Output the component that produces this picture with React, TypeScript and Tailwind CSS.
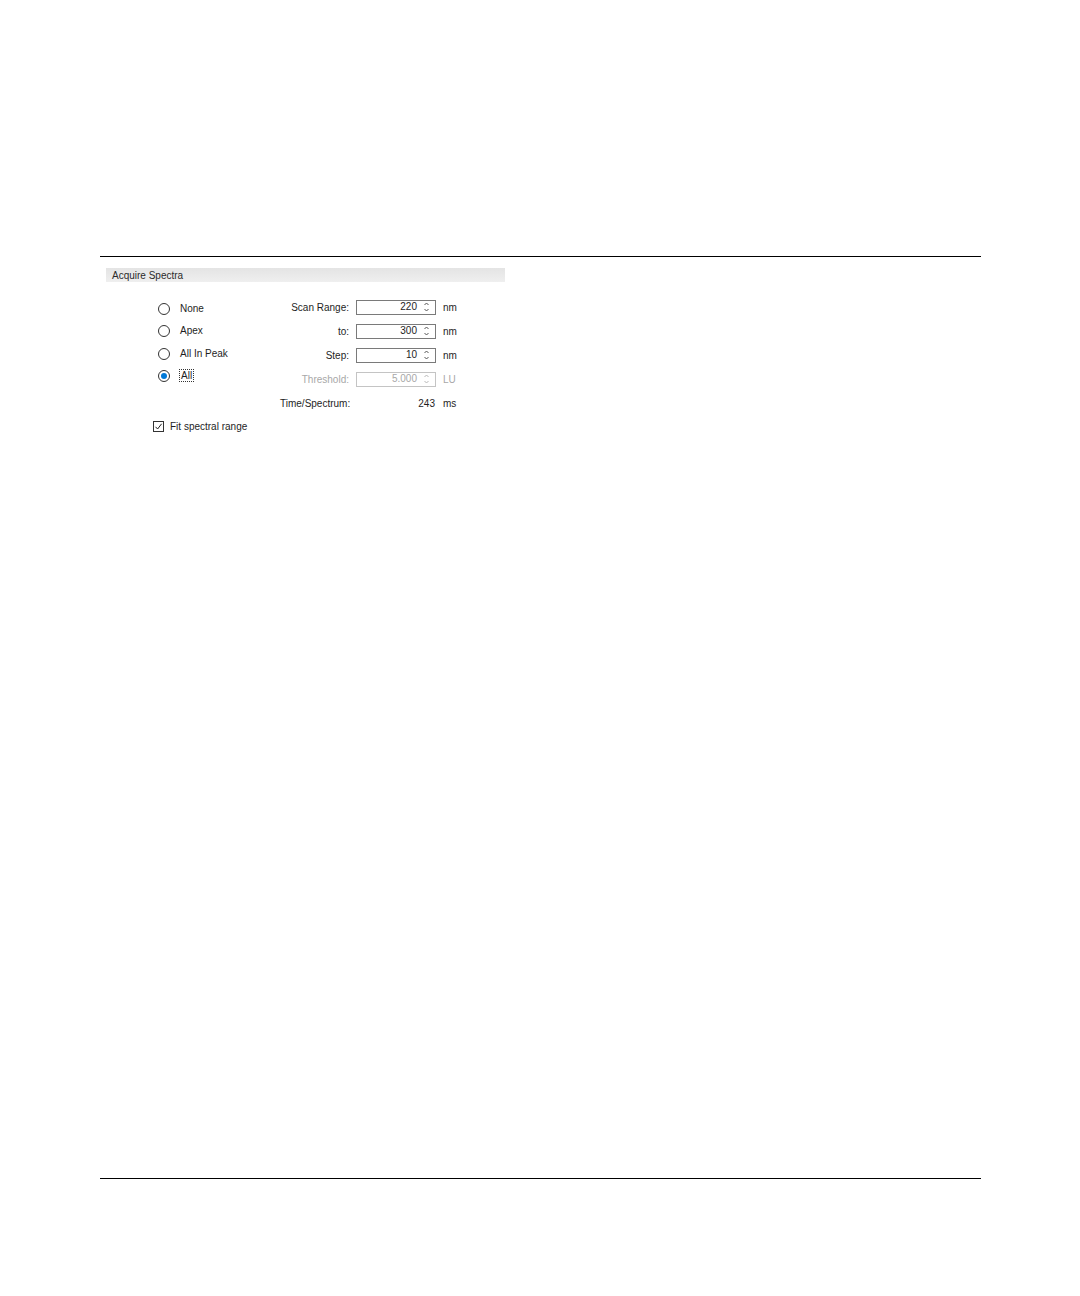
import React from 'react';

const font = { fontFamily: '"Liberation Sans", Arial, sans-serif' };

const Spinner = ({ disabled }: { disabled?: boolean }) => (
  <svg width="7" height="12" viewBox="0 0 7 12" className="shrink-0">
    <path d="M1.5 4 L3.5 2 L5.5 4" fill="none" stroke={disabled ? '#b8b8b8' : '#555'} strokeWidth="1" />
    <path d="M1.5 8 L3.5 10 L5.5 8" fill="none" stroke={disabled ? '#b8b8b8' : '#555'} strokeWidth="1" />
  </svg>
);

const NumField = ({ label, value, unit, disabled }: { label: string; value: string; unit: string; disabled?: boolean }) => (
  <div className="flex items-center h-[24px]">
    <span className={`w-[69px] text-right ${disabled ? 'text-[#a8a8a8]' : 'text-[#1e1e1e]'}`}>{label}</span>
    <div className={`ml-[7px] w-[80px] h-[15px] border flex items-center justify-end pr-[5px] gap-[6px] ${disabled ? 'border-[#c4c4c4] text-[#a8a8a8]' : 'border-[#7a7a7a] text-[#1e1e1e]'}`}>
      <span className="leading-none">{value}</span>
      <Spinner disabled={disabled} />
    </div>
    <span className={`ml-[7px] ${disabled ? 'text-[#a8a8a8]' : 'text-[#1e1e1e]'}`}>{unit}</span>
  </div>
);

const Radio = ({ label }: { label: string }) => (
  <div className="flex items-center h-[22.4px]">
    <div className="w-[12px] h-[12px] rounded-full border border-[#333] shrink-0" />
    <span className="ml-[10px] text-[#1e1e1e] leading-[12px]">{label}</span>
  </div>
);

export default function App() {
  return (
    <div className="w-[1080px] h-[1296px] bg-white text-[10px] flex flex-col" style={font}>
      <div className="pt-[256px] pl-[100px] flex flex-col">
        <div className="w-[881px] h-[1px] bg-black" />
        <div className="mt-[11px] ml-[6px] w-[399px] h-[14px] bg-gradient-to-b from-[#e4e4e4] to-[#efefef] flex items-center pl-[6px] text-[#2a2a2a]">
          Acquire Spectra
        </div>

        <div className="flex">
          <div className="ml-[58px] mt-[15.6px] w-[122px] flex flex-col">
            <Radio label="None" />
            <Radio label="Apex" />
            <Radio label="All In Peak" />
            <div className="flex items-center h-[22.4px]">
              <div className="w-[12px] h-[12px] rounded-full border border-[#333] flex items-center justify-center shrink-0">
                <div className="w-[6px] h-[6px] rounded-full bg-[#0078d7]" />
              </div>
              <span className="ml-[9px] text-[#1e1e1e] leading-[11px] px-[1px] border border-dotted border-[#333]">All</span>
            </div>
          </div>

          <div className="mt-[13px] flex flex-col">
            <NumField label="Scan Range:" value="220" unit="nm" />
            <NumField label="to:" value="300" unit="nm" />
            <NumField label="Step:" value="10" unit="nm" />
            <NumField label="Threshold:" value="5.000" unit="LU" disabled />
            <div className="flex items-center h-[25px] text-[#1e1e1e]">
              <span className="w-[76px]">Time/Spectrum:</span>
              <span className="w-[79px] text-right">243</span>
              <span className="ml-[8px]">ms</span>
            </div>
          </div>
        </div>

        <div className="ml-[53px] mt-[3px] flex items-center h-[14px]">
          <div className="w-[11px] h-[11px] border border-[#333] flex items-center justify-center">
            <svg width="9" height="9" viewBox="0 0 9 9">
              <path d="M1.5 4.8 L3.6 7 L7.6 1.8" fill="none" stroke="#222" strokeWidth="1" />
            </svg>
          </div>
          <span className="ml-[6px] text-[#1e1e1e]">Fit spectral range</span>
        </div>
      </div>

      <div className="mt-[745px] ml-[100px] w-[881px] h-[1px] bg-black" />
    </div>
  );
}
